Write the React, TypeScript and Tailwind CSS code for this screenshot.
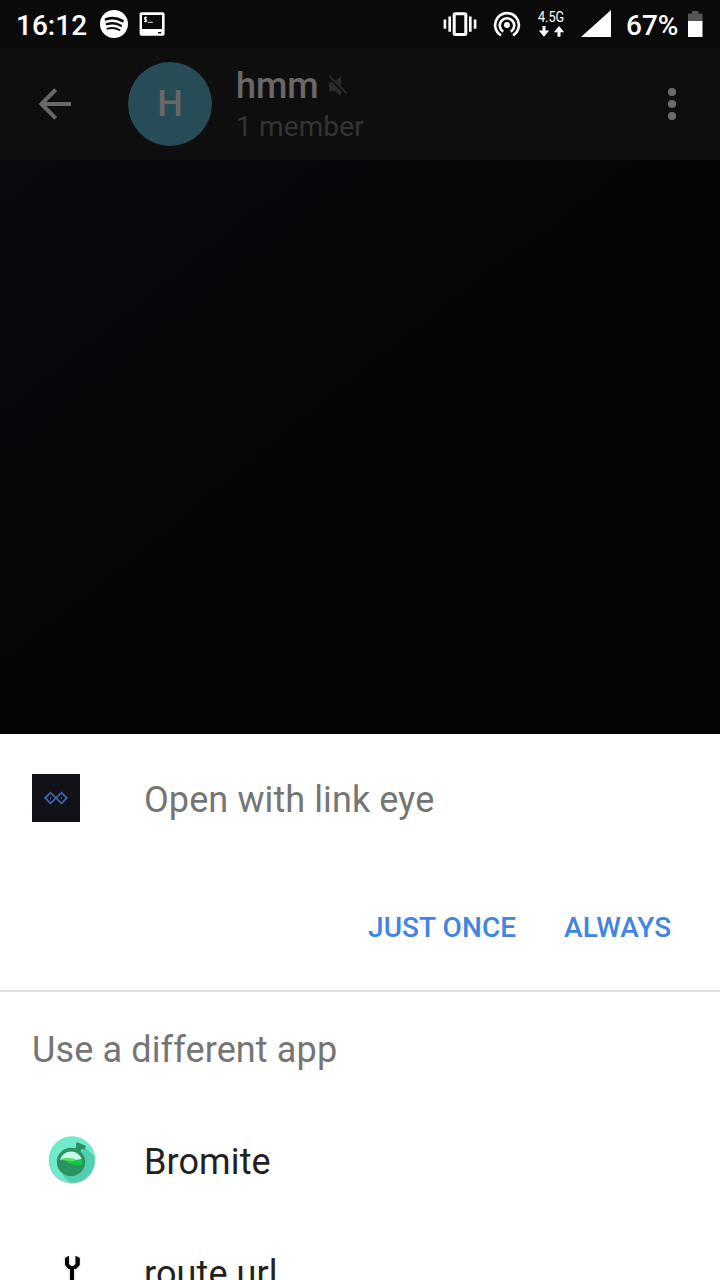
import type { ReactNode } from "react";

function StatusBar() {
  return (
    <header className="flex h-12 shrink-0 bg-[#0a0a0a] pl-4 text-[28px] leading-[52px] font-medium text-white">
      <span className="w-[84px] shrink-0 whitespace-nowrap">16:12</span>
      <svg className="h-12 w-[343px] shrink-0" viewBox="100 0 343 48">
        <circle cx="114" cy="24" r="14" fill="white" />
        <g fill="none" stroke="#0a0a0a" strokeLinecap="round">
          <path d="M106 19.3Q115 16.4 122.5 21" strokeWidth="2.7" />
          <path d="M106.8 24.2Q114.5 21.7 121 25.7" strokeWidth="2.3" />
          <path d="M107.5 28.7Q114 26.7 119.5 30" strokeWidth="1.9" />
        </g>
        <rect x="139.6" y="12.2" width="25" height="23.6" rx="2" fill="white" />
        <rect x="142" y="15" width="20" height="14" fill="#0a0a0a" />
        <rect x="158" y="32" width="3.3" height="1.5" fill="#0a0a0a" />
        <path d="M147 17.5H144.5V19.4H146.7V21.5H144M145.6 16.3V22.5M148 22.3H152.8" fill="none" stroke="white" strokeWidth="0.9" />
      </svg>
      <svg className="h-12 w-[90px] shrink-0" viewBox="443 0 90 48">
        <rect x="454.2" y="13.7" width="11.6" height="20.8" rx="1" fill="none" stroke="white" strokeWidth="3" />
        <path d="M444.9 19.5V28.7M449.7 16.5V31.7M470.3 16.5V31.7M475.1 19.5V28.7" stroke="white" strokeWidth="2.6" />
        <circle cx="507" cy="25.1" r="3" fill="white" />
        <path d="M503.2 31.6A7.2 7.2 0 1 1 510.8 31.6M501 35.3A11.9 11.9 0 1 1 513 35.3" fill="none" stroke="white" strokeWidth="2.6" />
      </svg>
      <div className="flex h-12 w-[37px] shrink-0 flex-col pt-[10px] pl-[5px]">
        <span className="h-4 w-8 origin-left scale-x-[.9] text-[14px] leading-[14px] font-normal">4.5G</span>
        <svg className="h-[12px] w-[28px]" viewBox="538 26 28 12">
          <path d="M542.5 26H545.5V30.5H549.2L544 36.7L538.8 30.5H542.5ZM557.5 36.7H560.5V32.2H564.2L559 26L553.8 32.2H557.5Z" fill="white" />
        </svg>
      </div>
      <svg className="h-12 w-[56px] shrink-0" viewBox="570 0 56 48">
        <path d="M581 37H611V10Z" fill="white" />
      </svg>
      <span className="w-[60px] shrink-0 whitespace-nowrap">67%</span>
      <svg className="h-12 w-[34px] shrink-0" viewBox="686 0 34 48">
        <path d="M692 11H698.5V13.5H702.5V22H688V13.5H692Z" fill="#555" />
        <path d="M688 21H702.5V37H688Z" fill="white" />
      </svg>
    </header>
  );
}

function ChatHeader() {
  return (
    <div className="flex h-28 shrink-0 bg-[#0e0e0e]">
      <svg className="h-28 w-32 shrink-0" viewBox="0 48 128 112">
        <path d="M71 104H42M55.7 89.7L41.5 104L55.7 118.3" fill="none" stroke="#686868" strokeWidth="4" />
      </svg>
      <div className="mt-[14px] flex size-[84px] shrink-0 items-center justify-center rounded-full bg-[#264d57] text-[36px] font-medium text-[#686868]">H</div>
      <div className="flex flex-1 flex-col pt-[17px] pl-6">
        <div className="flex h-[42px] items-center text-[36px] leading-[42px] font-medium text-[#686868]">
          <span className="w-[92px]">hmm</span>
          <svg className="h-[22px] w-5" viewBox="328 75 20 22">
            <path d="M329 82.3H332L341 91.2V96L335.3 91.2H329ZM341 76.5V86L335.7 80.7Z" fill="#2b2b2b" />
            <path d="M329.2 75.9L346.6 93.3" stroke="#2b2b2b" strokeWidth="2" />
          </svg>
        </div>
        <span className="text-[28px] leading-[40px] tracking-[0.14px] text-[#343434]">1 member</span>
      </div>
      <svg className="h-28 w-24 shrink-0" viewBox="624 48 96 112" fill="#6b6b6b">
        <circle cx="672" cy="92" r="4.1" />
        <circle cx="672" cy="104" r="4.1" />
        <circle cx="672" cy="116" r="4.1" />
      </svg>
    </div>
  );
}

function LinkEyeIcon() {
  return (
    <svg className="size-12 shrink-0" viewBox="0 0 48 48">
      <path d="M0 0H48V48H0Z" fill="#131118" />
      <path d="M13.2 24L18.5 18.7L29.5 29.3L34.8 24L29.5 18.7L18.5 29.3Z" fill="none" stroke="#3c66ac" strokeWidth="1.8" />
      <path d="M18.5 23V25M29.5 23V25" stroke="#3c66ac" />
    </svg>
  );
}

function BromiteIcon() {
  return (
    <svg className="h-[50px] w-12" viewBox="48 1135 48 50">
      <circle cx="72" cy="1160.5" r="23.3" fill="#bac9c4" />
      <circle cx="72" cy="1159.5" r="23.2" fill="#70eacb" />
      <path d="M84.5 1147L94.2 1156C97 1170 86 1183 72 1182.7C69 1182.5 67 1181 62 1174Z" fill="#52cfb1" />
      <path d="M76 1144L77 1142L86 1146L84.5 1149.5L81.5 1149L80.5 1152L75 1149L76.3 1146Z" fill="#2a9361" />
      <circle cx="71" cy="1162" r="14.2" fill="#2a9361" />
      <path d="M60 1160A11.2 10.5 0 0 1 82 1160Z" fill="#ccf5eb" />
      <path d="M60 1159.5C65 1156.8 73 1157 78 1161L80 1163C71 1164 68 1160 60 1159.8Z" fill="#58df66" />
      <path d="M67 1161.5C74 1162 77 1159 82.2 1159V1165H76Q70 1164.5 67 1161.5Z" fill="#13c643" />
    </svg>
  );
}

function RouteIcon() {
  return (
    <svg className="size-12" viewBox="48 1248 48 48">
      <path d="M67 1256V1264L69.5 1267.5H74.8L77.3 1264V1256M72 1267V1290" fill="none" stroke="#eee" strokeWidth="7" />
      <path d="M70.2 1254H74V1264.5H70.2Z" fill="white" />
      <path d="M65 1258L69 1255.7V1264L71 1266H73.5L75.5 1264V1255.7L79.8 1258V1265L76 1269H74V1290H70V1269H68.5L65 1265Z" fill="black" />
    </svg>
  );
}

function AppRow({ icon, name }: { icon: ReactNode; name: string }) {
  return (
    <div className="flex h-28 items-center">
      <div className="flex w-36 shrink-0 justify-center">{icon}</div>
      <span className="pt-1 text-[36px] leading-[42px] tracking-[0.1px] text-[#212121]">{name}</span>
    </div>
  );
}

export default function App() {
  return (
    <div className="flex h-[1280px] w-[720px] flex-col overflow-hidden bg-white font-[Roboto,sans-serif]">
      <StatusBar />
      <ChatHeader />
      <main className="h-[574px] shrink-0 bg-linear-to-br from-[#080a0f] via-[#050506] to-[#030405]" />
      <section className="shrink-0 bg-white">
        <div className="flex h-32 items-center gap-16 px-8 text-[36px] text-[#757575]">
          <LinkEyeIcon />
          <h1 className="pt-1 tracking-[0.1px]">Open with link eye</h1>
        </div>
        <div className="flex h-[130px] justify-end gap-12 border-b-2 border-[#e0e0e0] pt-[49px] pr-12 text-[28px] leading-[34px] font-medium text-[#4285e0]">
          <button className="h-[34px] w-[148px] text-left tracking-[0.08px] whitespace-nowrap">JUST ONCE</button>
          <button className="h-[34px] w-[108px] text-left tracking-[0.08px]">ALWAYS</button>
        </div>
        <h2 className="h-28 px-8 pt-[37px] text-[36px] leading-[42px] tracking-[0.13px] text-[#757575]">Use a different app</h2>
        <AppRow icon={<BromiteIcon />} name="Bromite" />
        <AppRow icon={<RouteIcon />} name="route url" />
      </section>
    </div>
  );
}
